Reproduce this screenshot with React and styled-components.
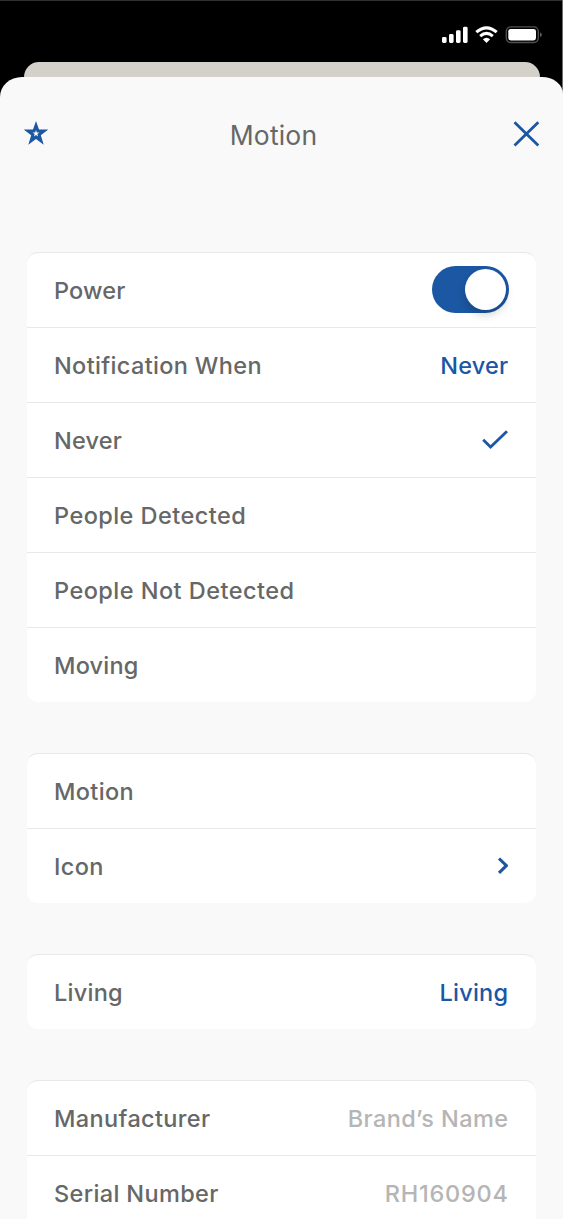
import React from "react";
import styled, { createGlobalStyle } from "styled-components";

const BLUE = "#1b57a3";
const INK = "#666767";

const GlobalStyle = createGlobalStyle`
  html, body { margin: 0; padding: 0; background: #000; }
  * { box-sizing: border-box; }
  body { overflow: hidden; }
`;

const Screen = styled.div`
  width: 563px;
  height: 1219px;
  overflow: hidden;
  background:
    linear-gradient(to left, #707070 1px, transparent 1px),
    linear-gradient(to bottom, #303030 1px, #000 1px);
  font-family: Inter, "Liberation Sans", sans-serif;
  display: flex;
  flex-direction: column;
`;

const StatusBar = styled.header`
  height: 62px;
  flex: none;
  padding: 24px 21px 0 0;
  display: flex;
  justify-content: flex-end;
`;

const BackSheet = styled.div`
  height: 15px;
  flex: none;
  margin: 0 23px 0 24px;
  background: #d4d1cb;
  border-radius: 15px 15px 0 0;
`;

const Sheet = styled.main`
  flex: 1;
  min-height: 0;
  overflow: hidden;
  background: #f9f9f9;
  border-radius: 22px 21px 0 0 / 20px 17px 0 0;
`;

const TitleBar = styled.div`
  height: 175px;
  padding: 43px 23px 0 23px;
  display: grid;
  grid-template-columns: 28px 1fr 28px;
  align-items: start;
`;

const Title = styled.h1`
  margin: -1px 0 0;
  padding-right: 16px;
  text-align: center;
  font-size: 26.5px;
  line-height: 32px;
  font-weight: 400;
  letter-spacing: 0.2px;
  color: ${INK};
`;

const IconButton = styled.button`
  display: flex;
  padding: 0;
  border: 0;
  background: none;
  color: ${BLUE};
`;

const Groups = styled.div`
  display: flex;
  flex-direction: column;
  gap: 51px;
  padding: 0 27px;
`;

const Card = styled.section`
  flex: none;
  background: #fff;
  border-top: 1px solid #e8e8e8;
  border-radius: 11px;
`;

const Row = styled.div`
  height: 75px;
  padding: 0 28px 0 27px;
  display: flex;
  align-items: center;
  justify-content: space-between;
  color: ${BLUE};
  &:first-child { height: 74px; }
  & + & { border-top: 1px solid #e8e8e8; }
`;

const Text = styled.span`
  padding-top: 2px;
  font-size: 23.5px;
  line-height: 30px;
  font-weight: 460;
  letter-spacing: ${(p) => p.$track ?? 0.36}px;
  margin-right: ${(p) => -(p.$track ?? 0.36)}px;
  color: ${(p) => p.$color || INK};
  white-space: nowrap;
`;

const Toggle = styled.div`
  width: 77px;
  height: 47px;
  margin: 0 -1px 1px 0;
  padding: 3px;
  display: flex;
  justify-content: flex-end;
  border-radius: 24px;
  background: ${BLUE};
`;

const Knob = styled.div`
  width: 41px;
  height: 41px;
  border-radius: 50%;
  background: #fff;
  box-shadow: 0 5px 9px rgba(0, 0, 0, 0.17);
`;

const StatusIcons = () => (
  <svg width="102" height="22" viewBox="440 24 102 22">
    <g fill="#fff">
      <rect x="442" y="37" width="4.6" height="6" rx="1.4" />
      <rect x="449" y="34" width="4.6" height="9" rx="1.4" />
      <rect x="456" y="30.2" width="4.6" height="12.8" rx="1.4" />
      <rect x="463" y="26.7" width="4.6" height="16.3" rx="1.4" />
      <path d="M486.5 43 L482.9 39.2 Q486.5 36.2 490.1 39.2Z" />
    </g>
    <g fill="none" stroke="#fff" strokeWidth="3.1">
      <path d="M476.3 32.1 Q486.5 23.5 496.7 32.1" />
      <path d="M480.2 36.1 Q486.5 30.7 492.8 36.1" />
    </g>
    <rect x="506.3" y="26.9" width="32" height="15.6" rx="4.4" fill="none" stroke="#505050" strokeWidth="1.4" />
    <rect x="508.3" y="28.9" width="27.7" height="11.6" rx="2.4" fill="#fff" />
    <path d="M540 32.2 Q542 33.3 542 34.7 T540 37.2Z" fill="#5b5b5b" />
  </svg>
);

const Star = () => (
  <svg width="26" height="27" viewBox="0 0 26 27">
    <path fill="currentColor" d="M13 0.9 L16 9.6 L25.3 9.6 L17.8 15.2 L20.7 24.7 L13 19 L5.3 24.7 L8.2 15.2 L0.7 9.6 L10 9.6Z" />
    <path fill="#fff" d="M13 9.9 L13.8 12.4 H16.4 L14.3 13.9 L15.1 16.4 L13 14.9 L10.9 16.4 L11.7 13.9 L9.6 12.4 H12.2Z" />
  </svg>
);

const Close = () => (
  <svg width="28" height="28" viewBox="0 0 28 28" fill="none" stroke="currentColor" strokeWidth="2.8">
    <path d="M2.5 2.2 L26.3 25.4 M26.3 2.2 L2.5 25.4" />
  </svg>
);

const Check = () => (
  <svg width="27" height="22" viewBox="0 0 27 22" fill="none" stroke="currentColor" strokeWidth="2.8">
    <path d="M2.2 10.8 L9.6 18.1 L26 2.3" />
  </svg>
);

const Chevron = () => (
  <svg width="12" height="18" viewBox="0 0 12 18" fill="none" stroke="currentColor" strokeWidth="3.1">
    <path d="M3 1.5 L10.4 8.7 L3 15.9" />
  </svg>
);

const Value = (props) => <Text $color={BLUE} {...props} />;
const Muted = (props) => <Text $color="#b5b5b5" {...props} />;

export default function App() {
  return (
    <>
      <GlobalStyle />
      <Screen>
        <StatusBar><StatusIcons /></StatusBar>
        <BackSheet />
        <Sheet>
          <TitleBar>
            <IconButton aria-label="Favorite"><Star /></IconButton>
            <Title>Motion</Title>
            <IconButton aria-label="Close"><Close /></IconButton>
          </TitleBar>
          <Groups>
            <Card>
              <Row><Text $track={0.15}>Power</Text><Toggle role="switch" aria-checked="true"><Knob /></Toggle></Row>
              <Row><Text $track={0.34}>Notification When</Text><Value $track={0.15}>Never</Value></Row>
              <Row><Text $track={0.2}>Never</Text><Check /></Row>
              <Row><Text $track={0.45}>People Detected</Text></Row>
              <Row><Text $track={0.46}>People Not Detected</Text></Row>
              <Row><Text $track={0.2}>Moving</Text></Row>
            </Card>
            <Card>
              <Row><Text>Motion</Text></Row>
              <Row><Text>Icon</Text><Chevron /></Row>
            </Card>
            <Card>
              <Row><Text $track={0.25}>Living</Text><Value $track={0.22}>Living</Value></Row>
            </Card>
            <Card>
              <Row><Text>Manufacturer</Text><Muted $track={0.4}>Brand’s Name</Muted></Row>
              <Row><Text>Serial Number</Text><Muted $track={0.78}>RH160904</Muted></Row>
            </Card>
          </Groups>
        </Sheet>
      </Screen>
    </>
  );
}
